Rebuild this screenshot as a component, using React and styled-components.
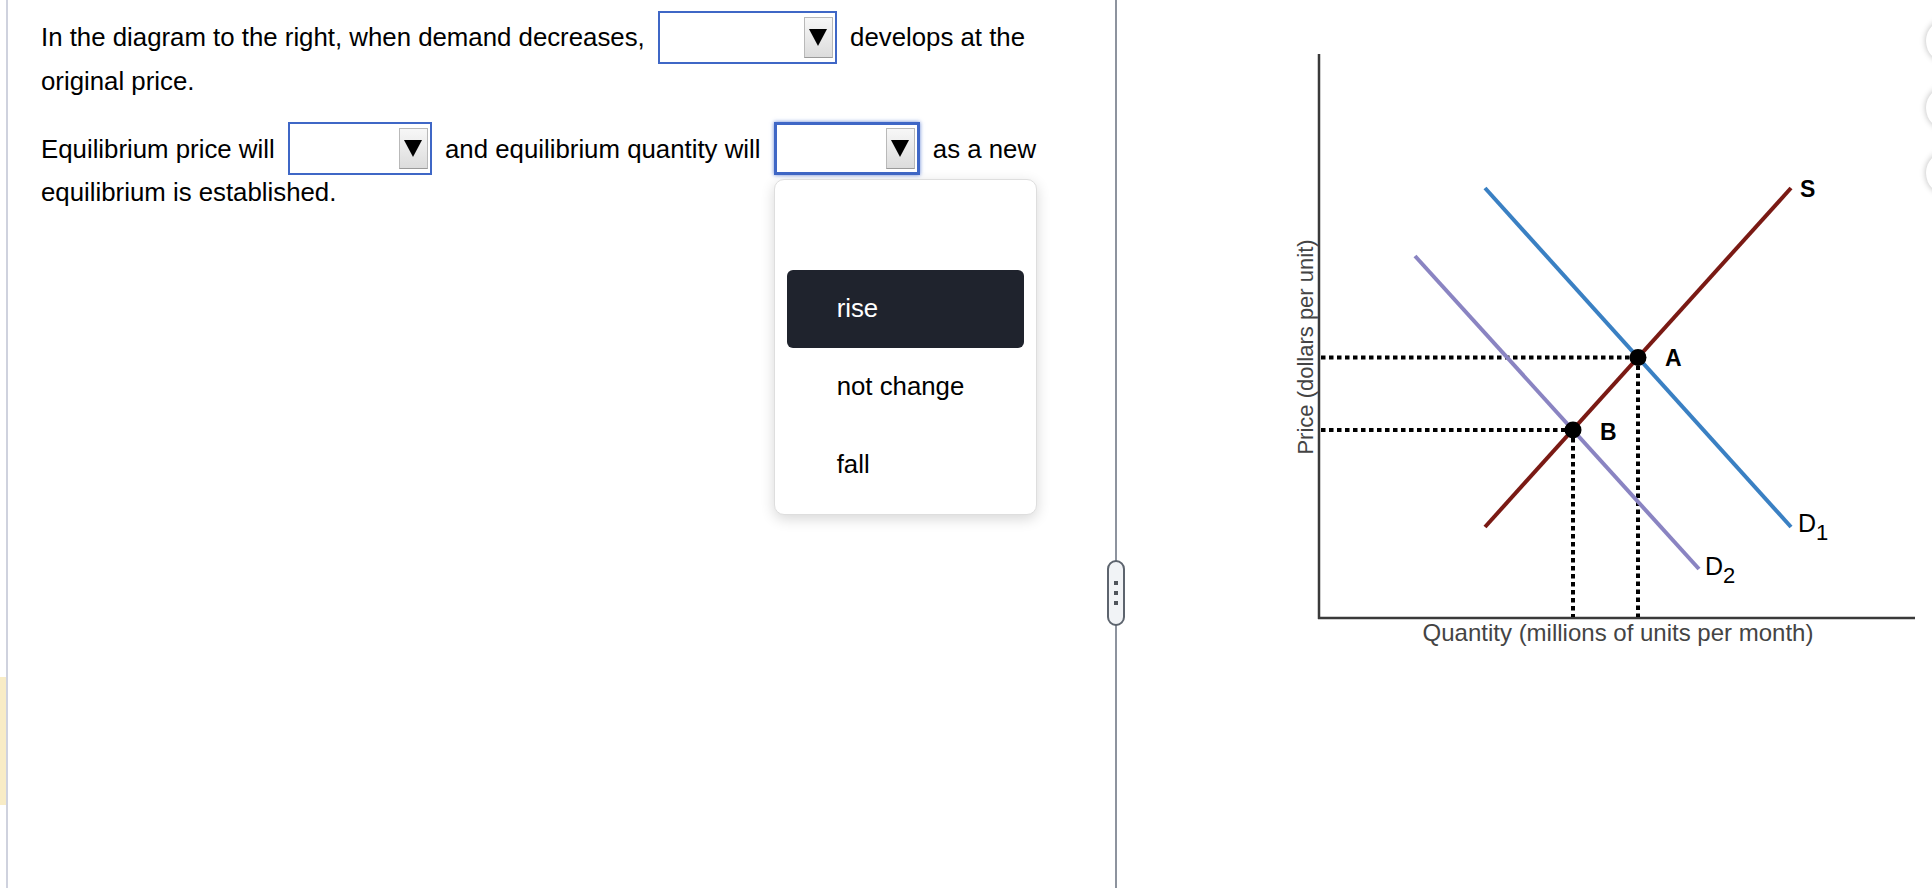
import React from "react";
import styled, { createGlobalStyle, css } from "styled-components";

const GlobalStyle = createGlobalStyle`
  html, body {
    margin: 0;
    padding: 0;
    background: #ffffff;
    overflow: hidden;
  }
`;

const Page = styled.div`
  position: relative;
  display: flex;
  width: 1932px;
  height: 888px;
  overflow: hidden;
  background: #ffffff;
  font-family: "Liberation Sans", Arial, sans-serif;
  color: #000;
`;

// left gutter with the yellow marker
const Gutter = styled.div`
  width: 6px;
  display: flex;
  flex-direction: column;
`;

const Marker = styled.div`
  margin-top: 677px;
  height: 128px;
  background: #f8ecc6;
`;

const QuestionPane = styled.div`
  position: relative;
  width: 1109px;
  box-sizing: border-box;
  border-left: 2px solid #cfd2de;
  padding: 16px 40px 0 33px;
`;

const Paragraph = styled.p`
  margin: 0 0 26px;
  font-size: 25.8px;
  line-height: 42px;
`;

const Select = styled.span`
  position: relative;
  top: -2px;
  display: inline-flex;
  vertical-align: middle;
  justify-content: flex-end;
  align-items: center;
  box-sizing: border-box;
  width: ${(p) => p.$w}px;
  height: 53px;
  margin: -6px 6px;
  padding-right: 2px;
  background: #fff;
  border: 2px solid #3f67c6;

  ${(p) =>
    p.$focused &&
    css`
      border-width: 3px;
      box-shadow: 0 0 4px rgba(55, 95, 200, 0.75);
    `}
`;

const ArrowButton = styled.span`
  display: flex;
  align-items: center;
  justify-content: center;
  box-sizing: border-box;
  width: 29px;
  height: 41px;
  border: 1px solid #b9b9b9;
  border-bottom-color: #9a9a9a;
  background: linear-gradient(#f7f7f7, #dcdcdc);

  &::after {
    content: "";
    border-left: 9px solid transparent;
    border-right: 9px solid transparent;
    border-top: 17px solid #000;
  }
`;

const Menu = styled.div`
  position: absolute;
  top: calc(100% + 7px);
  left: -3px;
  z-index: 10;
  width: 263px;
  box-sizing: border-box;
  padding: 12px 12px 10px;
  background: #fff;
  border: 1px solid #dedede;
  border-radius: 10px;
  box-shadow: 0 4px 14px rgba(0, 0, 0, 0.16);
`;

const Option = styled.div`
  display: flex;
  align-items: center;
  height: 78px;
  padding-left: 50px;
  border-radius: 6px;
  font-size: 25.8px;
  line-height: 1;
  color: ${(p) => (p.$active ? "#ffffff" : "#000000")};
  background: ${(p) => (p.$active ? "#1f232d" : "transparent")};
`;

const Divider = styled.div`
  position: relative;
  width: 2px;
  background: #8d939e;
`;

const Handle = styled.div`
  position: absolute;
  top: 560px;
  left: -8px;
  width: 18px;
  height: 66px;
  box-sizing: border-box;
  border: 2px solid #5d646e;
  border-radius: 9px;
  background: #f1f3f6;
  display: flex;
  flex-direction: column;
  align-items: center;
  justify-content: center;
  gap: 6px;
`;

const Dot = styled.span`
  width: 4px;
  height: 4px;
  background: #4f545b;
`;

const ChartPane = styled.div`
  flex: 1;
  display: flex;
`;

const SideButton = styled.div`
  position: absolute;
  left: 1926px;
  top: ${(p) => p.$top}px;
  width: 44px;
  height: 44px;
  border-radius: 50%;
  background: #fff;
  box-shadow: 0 0 6px rgba(0, 0, 0, 0.28);
`;

const DropdownSelect = ({ width, focused, children }) => (
  <Select $w={width} $focused={focused}>
    <ArrowButton />
    {children}
  </Select>
);

const Chart = () => (
  <svg width="815" height="888" viewBox="1117 0 815 888">
    <g fontFamily="Liberation Sans, Arial, sans-serif">
      {/* axes */}
      <line x1="1319" y1="54" x2="1319" y2="619" stroke="#3a3a3a" strokeWidth="2.5" />
      <line x1="1318" y1="618" x2="1915" y2="618" stroke="#3a3a3a" strokeWidth="2.5" />

      {/* dotted guides */}
      <g stroke="#000" strokeWidth="4" strokeDasharray="4.5 3.5">
        <line x1="1321" y1="357.5" x2="1638" y2="357.5" />
        <line x1="1321" y1="430" x2="1573" y2="430" />
        <line x1="1638" y1="357.5" x2="1638" y2="617" />
        <line x1="1573" y1="430" x2="1573" y2="617" />
      </g>

      {/* curves */}
      <line x1="1415" y1="256" x2="1699" y2="569" stroke="#8a84c2" strokeWidth="4" />
      <line x1="1485" y1="188" x2="1791" y2="527" stroke="#3a80c3" strokeWidth="4" />
      <line x1="1485" y1="527" x2="1791" y2="188" stroke="#7a1a14" strokeWidth="4" />

      <circle cx="1638" cy="357.5" r="8.5" fill="#000" />
      <circle cx="1573" cy="430" r="8.5" fill="#000" />

      {/* labels */}
      <text x="1800" y="197" fontSize="23" fontWeight="bold">S</text>
      <text x="1665" y="366" fontSize="23" fontWeight="bold">A</text>
      <text x="1600" y="440" fontSize="23" fontWeight="bold">B</text>
      <text x="1798" y="532" fontSize="25">
        D<tspan fontSize="22" dy="8">1</tspan>
      </text>
      <text x="1705" y="575" fontSize="25">
        D<tspan fontSize="22" dy="8">2</tspan>
      </text>

      <text x="1618" y="641" fontSize="24" fill="#444" textAnchor="middle">
        Quantity (millions of units per month)
      </text>
      <text
        x="0"
        y="0"
        fontSize="22"
        fill="#444"
        textAnchor="middle"
        transform="translate(1313 347) rotate(-90)"
      >
        Price (dollars per unit)
      </text>
    </g>
  </svg>
);

export default function App() {
  return (
    <>
      <GlobalStyle />
      <Page>
        <Gutter>
          <Marker />
        </Gutter>
        <QuestionPane>
          <Paragraph>
            In the diagram to the right, when demand decreases,{" "}
            <DropdownSelect width={179} /> develops at the original price.
          </Paragraph>
          <Paragraph>
            Equilibrium price will <DropdownSelect width={144} /> and
            equilibrium quantity will{" "}
            <DropdownSelect width={146} focused>
              <Menu>
                <Option />
                <Option $active>rise</Option>
                <Option>not change</Option>
                <Option>fall</Option>
              </Menu>
            </DropdownSelect>{" "}
            as a new equilibrium is established.
          </Paragraph>
        </QuestionPane>
        <Divider>
          <Handle>
            <Dot />
            <Dot />
            <Dot />
          </Handle>
        </Divider>
        <ChartPane>
          <Chart />
        </ChartPane>
        <SideButton $top={19} />
        <SideButton $top={86} />
        <SideButton $top={151} />
      </Page>
    </>
  );
}
